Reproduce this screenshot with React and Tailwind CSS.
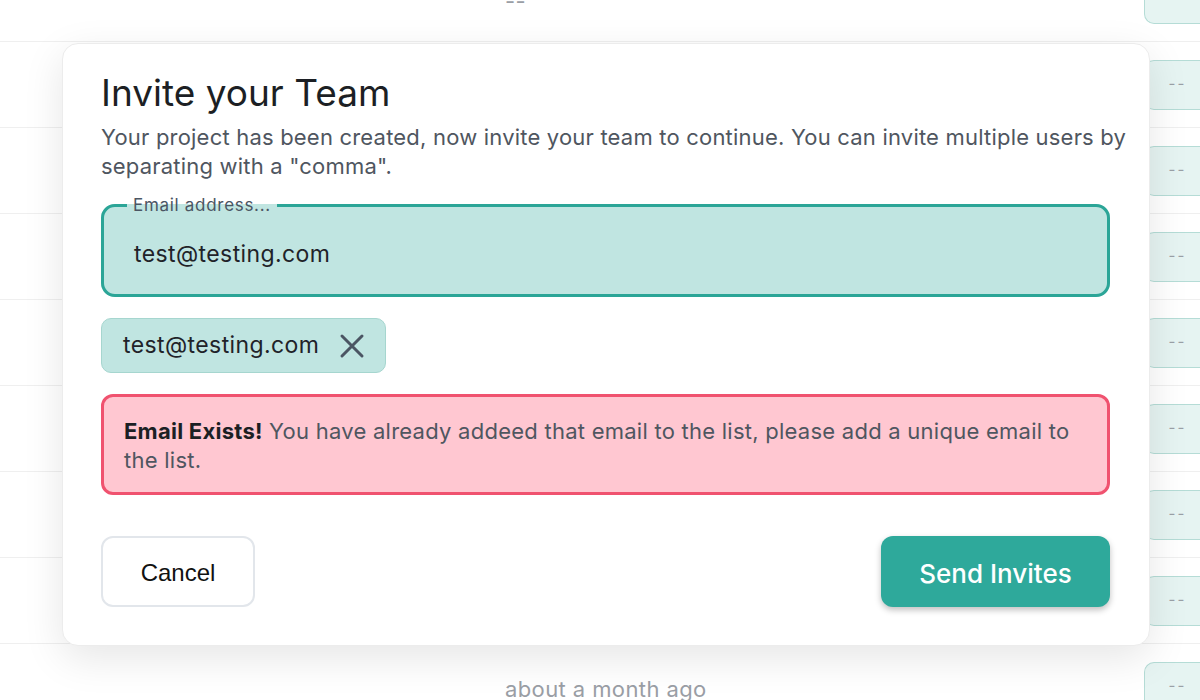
import React from "react";

const rows = [
  { mid: "--" },
  { mid: "" },
  { mid: "" },
  { mid: "" },
  { mid: "" },
  { mid: "" },
  { mid: "" },
  { mid: "" },
  { mid: "about a month ago" },
];

function XIcon() {
  return (
    <svg width="26" height="26" viewBox="0 0 26 26" fill="none">
      <path d="M3 3 L23 23 M23 3 L3 23" stroke="#4b5563" strokeWidth="3" strokeLinecap="round" />
    </svg>
  );
}

export default function App() {
  const font = { fontFamily: "Inter, 'Noto Sans', sans-serif" };
  return (
    <div className="relative w-[1200px] h-[700px] overflow-hidden bg-white" style={font}>
      {/* background table */}
      <div className="mt-[-44px] flex flex-col">
        {rows.map((r, i) => (
          <div key={i} className="h-[86px] border-b border-[#efefef] flex items-center">
            <div className="w-[505px] shrink-0" />
            <div className="flex-1 pt-[6px] text-[22px] tracking-[0.4px] text-[#9a9ea5]">{r.mid}</div>
            <div className="w-[56px] h-[50px] shrink-0 rounded-l-[10px] border border-r-0 border-[#b5dcd6] bg-[#e6f4f2] flex items-center pl-[10px]">
              <span className="w-[46px] text-center text-[15px] text-[#9aa0a6] tracking-[2px]">--</span>
            </div>
          </div>
        ))}
      </div>

      {/* modal */}
      <div className="absolute left-[62px] top-[43px] w-[1088px] h-[603px] rounded-[16px] bg-white border border-[#ececec] shadow-[0_12px_40px_rgba(0,0,0,0.10)] flex flex-col px-[38px] pt-[27px]">
        <h1 className="text-[37px] leading-[44px] text-[#1c1f24] font-normal">Invite your Team</h1>
        <p className="mt-[8px] mr-[-30px] text-[22px] leading-[29px] text-[#4f5660] tracking-[0.2px]">
          Your project has been created, now invite your team to continue. You can invite multiple users by separating with a "comma".
        </p>

        <fieldset className="mt-[14px] w-[1009px] h-[102px] rounded-[14px] border-[3px] border-[#2ba597] bg-[#c0e5e1] pl-[30px] pr-[20px]">
          <legend className="ml-[-7px] px-[6px] text-[17px] leading-[20px] text-[#4b5563] tracking-[0.7px]">Email address...</legend>
          <div className="mt-[24px] text-[23px] leading-[30px] text-[#1f2329] tracking-[0.4px]">test@testing.com</div>
        </fieldset>

        <div className="mt-[21px] flex">
          <div className="h-[55px] rounded-[10px] border border-[#a6d6cf] bg-[#c0e5e1] flex items-center pl-[21px] pr-[20px] gap-[20px]">
            <span className="text-[23px] text-[#1f2329] tracking-[0.4px]">test@testing.com</span>
            <XIcon />
          </div>
        </div>

        <div className="mt-[21px] w-[1009px] h-[101px] rounded-[12px] border-[3px] border-[#f0526f] bg-[#ffc7d1] px-[20px] pt-[20px]">
          <p className="text-[22px] leading-[29px] text-[#4f5660] tracking-[0.25px]">
            <span className="font-bold text-[#1c1f24]">Email Exists!</span> You have already addeed that email to the list, please add a unique email to the list.
          </p>
        </div>

        <div className="mt-[41px] w-[1009px] flex items-center justify-between">
          <button className="w-[154px] h-[71px] rounded-[12px] border-2 border-[#e2e6eb] bg-white text-[24px] text-[#111] pt-[3px]" style={{ fontFamily: "'Liberation Sans', Arial, sans-serif" }}>
            Cancel
          </button>
          <button className="w-[229px] h-[71px] rounded-[12px] bg-[#2ea99b] text-white text-[26px] font-medium pt-[3px] shadow-[0_3px_6px_rgba(0,0,0,0.25)]">
            Send Invites
          </button>
        </div>
      </div>
    </div>
  );
}
